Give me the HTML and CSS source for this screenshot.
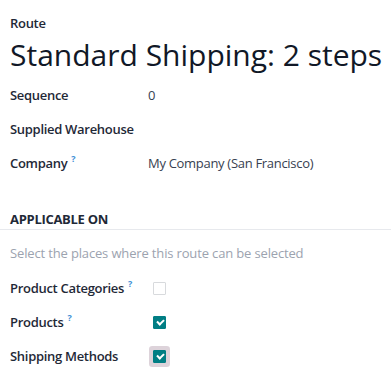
FILE: index.html
```html
<!DOCTYPE html>
<html lang="en">
<head>
  <meta charset="UTF-8">
  <meta name="viewport" content="width=device-width, initial-scale=1.0">
  <title>Route</title>
  <link rel="stylesheet" href="styles.css">
</head>
<body>
  <div class="sheet">
    <div class="title">
      <label class="title-label">Route</label>
      <h1>Standard Shipping: 2 steps</h1>
    </div>

    <div class="fields">
      <div class="row">
        <span class="label">Sequence</span>
        <span class="value">0</span>
      </div>
      <div class="row">
        <span class="label">Supplied Warehouse</span>
        <span class="value"></span>
      </div>
      <div class="row">
        <span class="label">Company<sup class="tip">?</sup></span>
        <span class="value">My Company (San Francisco)</span>
      </div>
    </div>

    <div class="group">
      <div class="group-title">APPLICABLE ON</div>
      <p class="help">Select the places where this route can be selected</p>
      <div class="row">
        <span class="label">Product Categories<sup class="tip">?</sup></span>
        <span class="value"><span class="check"></span></span>
      </div>
      <div class="row">
        <span class="label">Products<sup class="tip">?</sup></span>
        <span class="value"><span class="check checked"></span></span>
      </div>
      <div class="row">
        <span class="label">Shipping Methods</span>
        <span class="value"><span class="check checked focused"></span></span>
      </div>
    </div>
  </div>
</body>
</html>
```

FILE: styles.css
```css
/* General */
body {
  margin: 0;
  font-family: "Open Sans", "Noto Sans", sans-serif;
  font-size: 13px;
  letter-spacing: -0.3px;
  color: #374151;
  background: #ffffff;
}

.sheet {
  padding: 14px 0 0 10px;
}

/* Title */
.title-label {
  display: block;
  line-height: 18px;
  font-weight: 600;
  color: #1f2937;
}

h1 {
  margin: 0;
  font-size: 30px;
  font-weight: 400;
  letter-spacing: 0;
  line-height: 46px;
  color: #111827;
  white-space: nowrap;
}

/* Field rows */
.row {
  display: flex;
  align-items: center;
  height: 34px;
}

.label {
  width: 138px;
  font-weight: 600;
  color: #1f2937;
}

.value {
  flex: 1;
  display: flex;
  align-items: center;
}

.tip {
  margin-left: 4px;
  font-size: 9px;
  font-weight: 700;
  color: #3f8fd6;
  vertical-align: 6px;
  line-height: 0;
}

/* Group */
.group {
  margin-top: 29px;
}

.group-title {
  margin-left: -10px;
  padding-left: 10px;
  line-height: 20px;
  font-weight: 700;
  color: #1f2937;
  border-bottom: 1px solid #e7e9ed;
}

.help {
  margin: 13px 0 8px;
  line-height: 20px;
  letter-spacing: -0.15px;
  color: #9ca3af;
}

/* Checkbox */
.check {
  box-sizing: border-box;
  width: 13px;
  height: 13px;
  margin-left: 5px;
  border: 1px solid #d8dadd;
  border-radius: 1px;
  position: relative;
}

.check.checked {
  background: #017e84;
  border-color: #017e84;
}

.check.checked::after {
  content: "";
  position: absolute;
  left: 3px;
  top: 2px;
  width: 5px;
  height: 3px;
  border-left: 2px solid #ffffff;
  border-bottom: 2px solid #ffffff;
  transform: rotate(-45deg);
}

.check.focused {
  box-shadow: 0 0 0 4px #ddd3da;
}
```
